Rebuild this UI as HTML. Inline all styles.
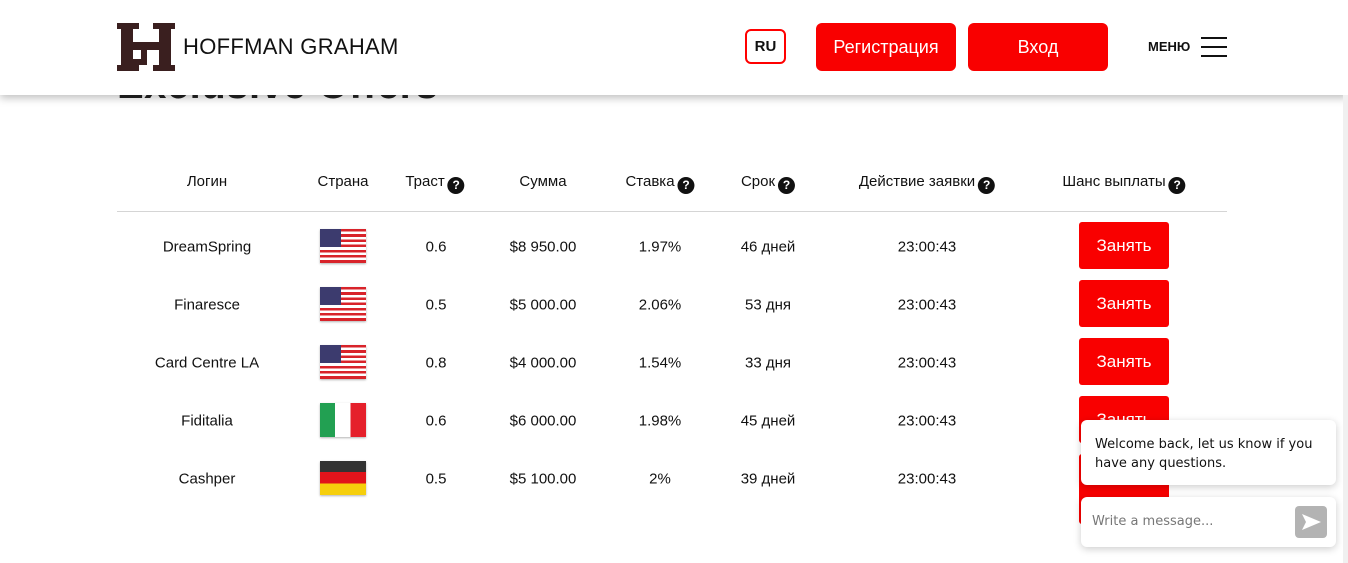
<!DOCTYPE html>
<html><head><meta charset="utf-8"><style>
*{margin:0;padding:0;box-sizing:border-box}
body{width:1348px;height:563px;overflow:hidden;background:#fff;font-family:"Liberation Sans","DejaVu Sans",sans-serif;color:#111;position:relative}
.a{position:absolute}
.h1{left:117px;top:65px;font-size:40px;font-weight:bold;color:#222;letter-spacing:.5px;line-height:40px}
header{position:absolute;left:0;top:0;width:1348px;height:95px;background:#fff;box-shadow:0 3px 8px rgba(0,0,0,.25)}
.th{top:173px;font-size:15px;transform:translateX(-50%);white-space:nowrap}
.q{display:inline-block;width:17px;height:17px;border-radius:50%;background:#111;color:#fff;font-size:12px;font-weight:bold;text-align:center;line-height:17px;vertical-align:-3px;margin-left:3px}
.td{font-size:15px;transform:translate(-50%,-50%);white-space:nowrap}
.btn{left:1079px;width:90px;height:47px;background:#f90000;border-radius:3px;color:#fff;font-size:17px;text-align:center;line-height:47px}
.flag{left:320px;width:46px;height:34px;box-shadow:0 1px 2px rgba(0,0,0,.3)}
.us{background:repeating-linear-gradient(#d8232a 0 2.6px,#fff 2.6px 5.2px)}
.us:before{content:"";position:absolute;left:0;top:0;width:21px;height:18px;background:#3c3b6e}
.it{background:linear-gradient(90deg,#22a052 0 33%,#fff 33% 66%,#e5202b 66%)}
.de{background:linear-gradient(#333 0 33%,#e1141b 33% 66%,#f6cf0c 66%)}
</style></head><body>
<div class="a h1">Exclusive Offers</div>
<header>
 <svg class="a" style="left:117px;top:23px" width="58" height="48" viewBox="0 0 58 48">
  <g fill="#3a1f1f"><rect x="0" y="0" width="22" height="6"/><rect x="36" y="0" width="22" height="6"/><rect x="0" y="42" width="22" height="6"/><rect x="36" y="42" width="22" height="6"/>
  <rect x="4" y="0" width="12" height="48"/><rect x="42" y="0" width="12" height="48"/><rect x="16" y="19" width="26" height="8"/><rect x="16" y="36" width="14" height="6"/><rect x="24" y="27" width="6" height="10"/></g>
 </svg>
 <div class="a" style="left:183px;top:34px;font-size:22px;letter-spacing:.3px;color:#111">HOFFMAN GRAHAM</div>
 <div class="a" style="left:745px;top:29px;width:41px;height:35px;border:2px solid #f00;border-radius:6px;font-size:15px;text-align:center;line-height:31px;font-weight:bold">RU</div>
 <div class="a" style="left:816px;top:23px;width:140px;height:48px;background:#f90000;border-radius:6px;color:#fff;font-size:18px;text-align:center;line-height:48px">Регистрация</div>
 <div class="a" style="left:968px;top:23px;width:140px;height:48px;background:#f90000;border-radius:6px;color:#fff;font-size:18px;text-align:center;line-height:48px">Вход</div>
 <div class="a" style="left:1148px;top:39px;font-size:13px;font-weight:bold">МЕНЮ</div>
 <div class="a" style="left:1201px;top:37px;width:26px;height:2px;background:#111"></div>
 <div class="a" style="left:1201px;top:46px;width:26px;height:2px;background:#111"></div>
 <div class="a" style="left:1201px;top:55px;width:26px;height:2px;background:#111"></div>
</header>
<div class="a th" style="left:207px">Логин</div>
<div class="a th" style="left:343px">Страна</div>
<div class="a th" style="left:435px">Траст<span class="q">?</span></div>
<div class="a th" style="left:543px">Сумма</div>
<div class="a th" style="left:660px">Ставка<span class="q">?</span></div>
<div class="a th" style="left:768px">Срок<span class="q">?</span></div>
<div class="a th" style="left:927px">Действие заявки<span class="q">?</span></div>
<div class="a th" style="left:1124px">Шанс выплаты<span class="q">?</span></div>
<div class="a" style="left:117px;top:211px;width:1110px;height:1px;background:#d5d5d5"></div>

<div class="a td" style="left:207px;top:247px">DreamSpring</div><div class="a flag us" style="top:229px"></div><div class="a td" style="left:436px;top:247px">0.6</div><div class="a td" style="left:543px;top:247px">$8 950.00</div><div class="a td" style="left:660px;top:247px">1.97%</div><div class="a td" style="left:768px;top:247px">46 дней</div><div class="a td" style="left:927px;top:247px">23:00:43</div><div class="a btn" style="top:222px">Занять</div>
<div class="a td" style="left:207px;top:305px">Finaresce</div><div class="a flag us" style="top:287px"></div><div class="a td" style="left:436px;top:305px">0.5</div><div class="a td" style="left:543px;top:305px">$5 000.00</div><div class="a td" style="left:660px;top:305px">2.06%</div><div class="a td" style="left:768px;top:305px">53 дня</div><div class="a td" style="left:927px;top:305px">23:00:43</div><div class="a btn" style="top:280px">Занять</div>
<div class="a td" style="left:207px;top:363px">Card Centre LA</div><div class="a flag us" style="top:345px"></div><div class="a td" style="left:436px;top:363px">0.8</div><div class="a td" style="left:543px;top:363px">$4 000.00</div><div class="a td" style="left:660px;top:363px">1.54%</div><div class="a td" style="left:768px;top:363px">33 дня</div><div class="a td" style="left:927px;top:363px">23:00:43</div><div class="a btn" style="top:338px">Занять</div>
<div class="a td" style="left:207px;top:421px">Fiditalia</div><div class="a flag it" style="top:403px"></div><div class="a td" style="left:436px;top:421px">0.6</div><div class="a td" style="left:543px;top:421px">$6 000.00</div><div class="a td" style="left:660px;top:421px">1.98%</div><div class="a td" style="left:768px;top:421px">45 дней</div><div class="a td" style="left:927px;top:421px">23:00:43</div><div class="a btn" style="top:396px">Занять</div>
<div class="a td" style="left:207px;top:479px">Cashper</div><div class="a flag de" style="top:461px"></div><div class="a td" style="left:436px;top:479px">0.5</div><div class="a td" style="left:543px;top:479px">$5 100.00</div><div class="a td" style="left:660px;top:479px">2%</div><div class="a td" style="left:768px;top:479px">39 дней</div><div class="a td" style="left:927px;top:479px">23:00:43</div><div class="a btn" style="top:454px;height:70px">Занять</div>

<div class="a" style="left:1081px;top:420px;width:255px;height:65px;background:#fff;border-radius:6px;box-shadow:0 2px 8px rgba(0,0,0,.2);padding:15px 14px;line-height:19px;font-family:'DejaVu Sans',sans-serif;font-size:13px;color:#111">Welcome back, let us know if you have any questions.</div>
<div class="a" style="left:1081px;top:497px;width:255px;height:50px;background:#fff;border-radius:6px;box-shadow:0 2px 8px rgba(0,0,0,.2)">
 <div class="a" style="left:11px;top:17px;font-family:'DejaVu Sans',sans-serif;font-size:13px;color:#777">Write a message...</div>
 <div class="a" style="left:214px;top:9px;width:32px;height:32px;background:#b3b3b3;border-radius:4px">
  <svg width="32" height="32" viewBox="0 0 32 32"><path d="M7 8 L26 16 L7 24 L11 16 Z" fill="#fff"/></svg>
 </div>
</div>
<div class="a" style="left:1343px;top:95px;width:5px;height:468px;background:#f0f0f0"></div>
</body></html>
